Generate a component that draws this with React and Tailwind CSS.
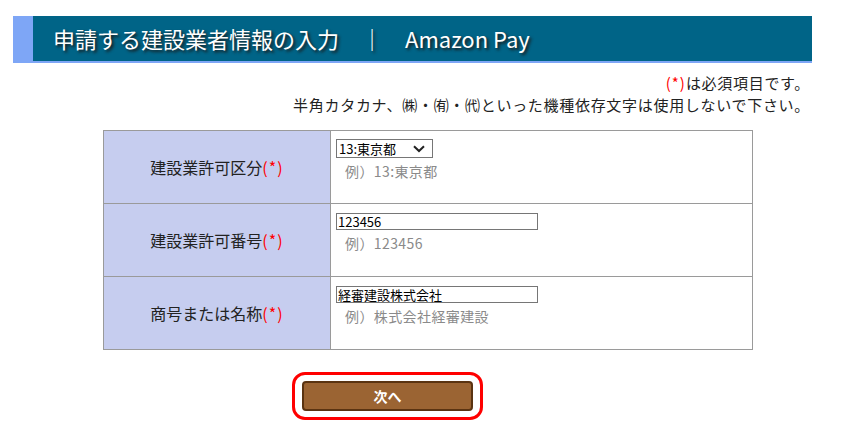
import React from "react";

const font = { fontFamily: '"Noto Sans CJK JP", "Noto Sans", sans-serif' };

function Req() {
  return <span className="text-[#ff0000] tracking-[1px]">(*)</span>;
}

function Row({ label, children }) {
  return (
    <tr>
      <td className="w-[227px] h-[73px] border border-[#9a9a9a] bg-[#c6cdef] text-center align-middle text-[16px] text-[#222]">
        {label}
        <Req />
      </td>
      <td className="border border-[#9a9a9a] bg-white align-top pt-[8px] pl-[5px]">
        {children}
      </td>
    </tr>
  );
}

function Example({ children }) {
  return <div className="mt-[3px] pl-[9px] text-[14px] leading-[20px] tracking-[0.4px] text-[#8a8a8a]">例）{children}</div>;
}

function TextBox({ value }) {
  return (
    <div className="w-[202px] h-[17px] border border-[#767676] bg-white px-[1px] text-[13px] leading-[15px] text-black">
      {value}
    </div>
  );
}

export default function App() {
  return (
    <div className="w-[854px] h-[434px] bg-white overflow-hidden" style={font}>
      <div className="pt-[16px] pl-[13px] w-[812px]">
        <div className="h-[47px] bg-[#006487] border-l-[20px] border-b-[2px] border-[#7ea6f6] flex items-center pl-[20px]">
          <span className="text-white text-[22px] whitespace-pre [text-shadow:2px_2px_3px_#1a1a1a]">
            申請する建設業者情報の入力　｜　Amazon Pay
          </span>
        </div>
        <div className="mt-[9px] pr-[2px] text-right text-[15px] leading-[22px] tracking-[0.7px] text-[#222]">
          <div>
            <Req />は必須項目です。
          </div>
          <div>半角カタカナ、㈱・㈲・㈹といった機種依存文字は使用しないで下さい。</div>
        </div>
      </div>
      <div className="mt-[14px] ml-[103px]">
        <table className="w-[650px] border-collapse">
          <tbody>
            <Row label="建設業許可区分">
              <div className="w-[97px] h-[19px] border border-[#767676] bg-white flex items-center justify-between pl-[2px] pr-[7px] text-[13px] text-black">
                <span>13:東京都</span>
                <svg width="12" height="8" viewBox="0 0 12 8">
                  <path d="M1 1.2 L6 6 L11 1.2" fill="none" stroke="#222" strokeWidth="2" />
                </svg>
              </div>
              <Example>13:東京都</Example>
            </Row>
            <Row label="建設業許可番号">
              <div className="pt-[1px]">
                <TextBox value="123456" />
              </div>
              <Example>123456</Example>
            </Row>
            <Row label="商号または名称">
              <div className="pt-[1px]">
                <TextBox value="経審建設株式会社" />
              </div>
              <Example>株式会社経審建設</Example>
            </Row>
          </tbody>
        </table>
      </div>
      <div className="mt-[22px] ml-[292px] w-[191px] h-[48px] border-[3px] border-[#ff0000] rounded-[13px] pt-[6px] px-[7px]">
        <div className="h-[30px] bg-[#9b6433] border-2 border-[#5a3311] rounded-[4px] flex items-center justify-center text-white font-bold text-[14px]">
          次へ
        </div>
      </div>
    </div>
  );
}
